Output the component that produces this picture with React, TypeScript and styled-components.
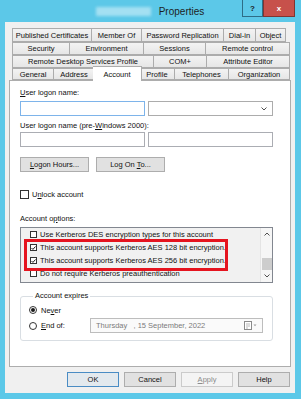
import React from "react";
import styled, { createGlobalStyle } from "styled-components";

const GlobalStyle = createGlobalStyle`
  html, body {
    margin: 0;
    padding: 0;
  }
  body {
    font-family: "Liberation Sans", Arial, sans-serif;
    font-size: 7.5px;
    color: #111;
  }
  * {
    box-sizing: border-box;
  }
`;

const Window = styled.div`
  width: 301px;
  height: 399px;
  background: #5cc8e8;
  padding: 0 6px 6px 5px;
  display: flex;
  flex-direction: column;
`;

const TitleBar = styled.div`
  height: 22px;
  display: grid;
  grid-template-columns: 1fr auto 1fr;
`;

const Title = styled.div`
  grid-column: 2;
  display: flex;
  align-items: center;
  gap: 8px;
  font-size: 10px;
  color: #1e1e1e;
`;

const Blurred = styled.span`
  width: 55px;
  height: 9px;
  background: #a4e0f2;
  filter: blur(1.5px);
`;

const Controls = styled.div`
  grid-column: 3;
  justify-self: end;
  display: flex;
  height: 17px;
`;

const CaptionButton = styled.div<{ $close?: boolean }>`
  width: ${(p) => (p.$close ? 32 : 21)}px;
  display: flex;
  align-items: center;
  justify-content: center;
  font-weight: 700;
  font-size: 8px;
  background: ${(p) => (p.$close ? "#c7514b" : "#5cc8e8")};
  color: ${(p) => (p.$close ? "#fff" : "#1b1b1b")};
  border: 1px solid ${(p) => (p.$close ? "#7f3531" : "#2e6d86")};
  border-top: none;
`;

const Client = styled.div`
  flex: 1;
  background: #f0f0f0;
  padding: 6px 5px 0 0;
  display: flex;
  flex-direction: column;
`;

const TabStrip = styled.div`
  margin-left: 7px;
  width: 278px;
  display: flex;
  flex-direction: column;
`;

const TabRow = styled.div<{ $h: number }>`
  height: ${(p) => p.$h}px;
  display: flex;
  align-items: flex-end;
`;

const Tab = styled.div<{ $w: number; $active?: boolean }>`
  width: ${(p) => p.$w + (p.$active ? 4 : 0)}px;
  height: ${(p) => (p.$active ? "calc(100% + 3px)" : "100%")};
  margin: ${(p) => (p.$active ? "0 -2px -1px -2px" : "0")};
  position: relative;
  z-index: ${(p) => (p.$active ? 2 : 0)};
  display: flex;
  align-items: center;
  justify-content: center;
  white-space: nowrap;
  border: 1px solid #acacac;
  border-bottom: ${(p) => (p.$active ? "none" : "1px solid #acacac")};
  & + & {
    border-left: ${(p) => (p.$active ? "1px solid #acacac" : "none")};
  }
  background: ${(p) =>
    p.$active ? "#fff" : "linear-gradient(#f3f3f3, #e6e6e6)"};
`;

const Panel = styled.div`
  margin: 0 0 0 4px;
  width: 282px;
  height: 287px;
  background: #fff;
  border: 1px solid #adadad;
  padding: 0 17px 0 10px;
  display: flex;
  flex-direction: column;
`;

const Label = styled.div<{ $mt: number }>`
  margin-top: ${(p) => p.$mt}px;
  line-height: 10px;
  white-space: nowrap;
`;

const Key = styled.span`
  text-decoration: underline;
`;

const FieldRow = styled.div<{ $mt: number }>`
  margin-top: ${(p) => p.$mt}px;
  display: flex;
  gap: 3px;
`;

const TextBox = styled.div<{ $focus?: boolean }>`
  width: 125px;
  height: 15px;
  background: #fff;
  border: 1px solid ${(p) => (p.$focus ? "#7eb4ea" : "#abadb3")};
`;

const Combo = styled.div`
  width: 125px;
  height: 15px;
  background: #fff;
  border: 1px solid #acacac;
  display: flex;
  align-items: center;
  justify-content: flex-end;
  padding-right: 5px;
`;

const ButtonRow = styled.div<{ $mt: number; $end?: boolean }>`
  margin-top: ${(p) => p.$mt}px;
  display: flex;
  gap: ${(p) => (p.$end ? 5 : 7)}px;
  justify-content: ${(p) => (p.$end ? "flex-end" : "flex-start")};
`;

const Button = styled.div<{ $w: number; $kind?: "default" | "disabled" }>`
  width: ${(p) => p.$w}px;
  height: 15px;
  display: flex;
  align-items: center;
  justify-content: center;
  white-space: pre;
  background: ${(p) =>
    p.$kind === "default"
      ? "#e3e9ee"
      : p.$kind === "disabled"
      ? "#f4f4f4"
      : "#e1e1e1"};
  border: 1px solid
    ${(p) =>
      p.$kind === "default"
        ? "#4a8cc4"
        : p.$kind === "disabled"
        ? "#cbcbcb"
        : "#adadad"};
  color: ${(p) => (p.$kind === "disabled" ? "#8c8c8c" : "#111")};
`;

const CheckRow = styled.div<{ $mt?: number }>`
  margin-top: ${(p) => p.$mt ?? 0}px;
  display: flex;
  align-items: center;
  gap: 3px;
  white-space: nowrap;
`;

const Box = styled.span<{ $size: number }>`
  width: ${(p) => p.$size}px;
  height: ${(p) => p.$size}px;
  flex: none;
  background: #fff;
  border: 1px solid #333;
  display: flex;
  align-items: center;
  justify-content: center;
`;

const ListBox = styled.div`
  position: relative;
  margin-top: 3px;
  width: 253px;
  height: 56px;
  border: 1px solid #828790;
  background: #f1f1f1;
  display: flex;
  overflow: hidden;
`;

const ListItems = styled.div`
  flex: 1;
  display: flex;
  flex-direction: column;
  padding-left: 9px;
`;

const ListItem = styled.div`
  height: 13px;
  flex: none;
  display: flex;
  align-items: center;
  gap: 3px;
  white-space: nowrap;
`;

const ScrollBar = styled.div`
  width: 12px;
  flex: none;
  background: #f6f6f6;
  border-left: 1px solid #e4e4e4;
  display: flex;
  flex-direction: column;
  align-items: center;
`;

const ScrollArrow = styled.div`
  height: 12px;
  display: flex;
  align-items: center;
  justify-content: center;
`;

const ScrollThumb = styled.div`
  margin-top: 18px;
  width: 10px;
  height: 12px;
  background: #cdcdcd;
`;

const Highlight = styled.div`
  position: absolute;
  left: 3px;
  top: 11px;
  width: 204px;
  height: 32px;
  border: 3px solid #e5141f;
`;

const Group = styled.fieldset`
  margin: 8px 0 0 0;
  padding: 4px 9px 7px 8px;
  min-width: 0;
  width: 253px;
  border: 1px solid #d9dee3;
  border-radius: 3px;
`;

const Legend = styled.legend`
  margin-left: 4px;
  padding: 0 2px;
  line-height: 10px;
`;

const RadioRow = styled.div<{ $mt?: number }>`
  margin-top: ${(p) => p.$mt ?? 0}px;
  display: flex;
  align-items: center;
  height: ${(p) => (p.$mt ? 15 : 10)}px;
`;

const RadioLabel = styled.div`
  width: 61px;
  display: flex;
  align-items: center;
  gap: 4px;
`;

const Radio = styled.span<{ $on?: boolean }>`
  width: 8px;
  height: 8px;
  border-radius: 50%;
  border: 1px solid #333;
  background: #fff;
  display: flex;
  align-items: center;
  justify-content: center;
  &::after {
    content: "";
    width: 4px;
    height: 4px;
    border-radius: 50%;
    background: ${(p) => (p.$on ? "#1a1a1a" : "transparent")};
  }
`;

const DatePicker = styled.div`
  flex: 1;
  height: 15px;
  border: 1px solid #bdbdbd;
  background: #fafafa;
  color: #7b7b7b;
  padding: 0 4px 0 5px;
  display: flex;
  align-items: center;
  justify-content: space-between;
  white-space: pre;
`;

const Check = () => (
  <svg width="6" height="6" viewBox="0 0 6 6">
    <path d="M0.6 3 L2.3 4.7 L5.4 1.2" fill="none" stroke="#1a1a1a" strokeWidth="1.2" />
  </svg>
);

const Chevron = ({ up }: { up?: boolean }) => (
  <svg width="6" height="4" viewBox="0 0 6 4">
    <path
      d={up ? "M0.5 3.5 L3 1 L5.5 3.5" : "M0.5 0.5 L3 3 L5.5 0.5"}
      fill="none"
      stroke="#505050"
      strokeWidth="1"
    />
  </svg>
);

const CalendarIcon = () => (
  <svg width="14" height="9" viewBox="0 0 14 9">
    <rect x="0.5" y="0.5" width="7" height="8" fill="#fff" stroke="#8a8a8a" />
    <path d="M2 3 H6 M2 5 H6 M2 7 H4" stroke="#a5a5a5" strokeWidth="0.8" />
    <path d="M9.5 3.5 L12.5 3.5 L11 5.2 Z" fill="#9a9a9a" />
  </svg>
);

const App: React.FC = () => {
  return (
    <>
      <GlobalStyle />
      <Window>
        <TitleBar>
          <Title>
            <Blurred />
            Properties
          </Title>
          <Controls>
            <CaptionButton>?</CaptionButton>
            <CaptionButton $close>x</CaptionButton>
          </Controls>
        </TitleBar>

        <Client>
          <TabStrip>
            <TabRow $h={14}>
              <Tab $w={80}>Published Certificates</Tab>
              <Tab $w={50}>Member Of</Tab>
              <Tab $w={82}>Password Replication</Tab>
              <Tab $w={32}>Dial-in</Tab>
              <Tab $w={30}>Object</Tab>
            </TabRow>
            <TabRow $h={13}>
              <Tab $w={58}>Security</Tab>
              <Tab $w={74}>Environment</Tab>
              <Tab $w={62}>Sessions</Tab>
              <Tab $w={84}>Remote control</Tab>
            </TabRow>
            <TabRow $h={13}>
              <Tab $w={142}>Remote Desktop Services Profile</Tab>
              <Tab $w={53}>COM+</Tab>
              <Tab $w={83}>Attribute Editor</Tab>
            </TabRow>
            <TabRow $h={12}>
              <Tab $w={42}>General</Tab>
              <Tab $w={41}>Address</Tab>
              <Tab $w={45} $active>
                Account
              </Tab>
              <Tab $w={35}>Profile</Tab>
              <Tab $w={54}>Telephones</Tab>
              <Tab $w={61}>Organization</Tab>
            </TabRow>
          </TabStrip>

          <Panel>
            <Label $mt={7}>
              <Key>U</Key>ser logon name:
            </Label>
            <FieldRow $mt={3}>
              <TextBox $focus />
              <Combo>
                <Chevron />
              </Combo>
            </FieldRow>

            <Label $mt={5}>
              User logon name (pre-<Key>W</Key>indows 2000):
            </Label>
            <FieldRow $mt={1}>
              <TextBox />
              <TextBox />
            </FieldRow>

            <ButtonRow $mt={10}>
              <Button $w={69}>
                <span>
                  <Key>L</Key>ogon Hours...
                </span>
              </Button>
              <Button $w={69}>
                <span>
                  Log On <Key>T</Key>o...
                </span>
              </Button>
            </ButtonRow>

            <CheckRow $mt={18}>
              <Box $size={9} />
              <span>
                U<Key>n</Key>lock account
              </span>
            </CheckRow>

            <Label $mt={15}>
              Account o<Key>p</Key>tions:
            </Label>
            <ListBox>
              <ListItems>
                <ListItem>
                  <Box $size={7} />
                  Use Kerberos DES encryption types for this account
                </ListItem>
                <ListItem>
                  <Box $size={7}>
                    <Check />
                  </Box>
                  This account supports Kerberos AES 128 bit encryption.
                </ListItem>
                <ListItem>
                  <Box $size={7}>
                    <Check />
                  </Box>
                  This account supports Kerberos AES 256 bit encryption.
                </ListItem>
                <ListItem>
                  <Box $size={7} />
                  Do not require Kerberos preauthentication
                </ListItem>
              </ListItems>
              <ScrollBar>
                <ScrollArrow>
                  <Chevron up />
                </ScrollArrow>
                <ScrollThumb />
                <ScrollArrow>
                  <Chevron />
                </ScrollArrow>
              </ScrollBar>
              <Highlight />
            </ListBox>

            <Group>
              <Legend>Account expires</Legend>
              <RadioRow>
                <RadioLabel>
                  <Radio $on />
                  <span>
                    Ne<Key>v</Key>er
                  </span>
                </RadioLabel>
              </RadioRow>
              <RadioRow $mt={3}>
                <RadioLabel>
                  <Radio />
                  <span>
                    <Key>E</Key>nd of:
                  </span>
                </RadioLabel>
                <DatePicker>
                  <span>Thursday   , 15 September, 2022</span>
                  <CalendarIcon />
                </DatePicker>
              </RadioRow>
            </Group>
          </Panel>

          <ButtonRow $mt={5} $end>
            <Button $w={52} $kind="default">
              OK
            </Button>
            <Button $w={52}>Cancel</Button>
            <Button $w={52} $kind="disabled">
              <span>
                <Key>A</Key>pply
              </span>
            </Button>
            <Button $w={52}>Help</Button>
          </ButtonRow>
        </Client>
      </Window>
    </>
  );
};

export default App;
